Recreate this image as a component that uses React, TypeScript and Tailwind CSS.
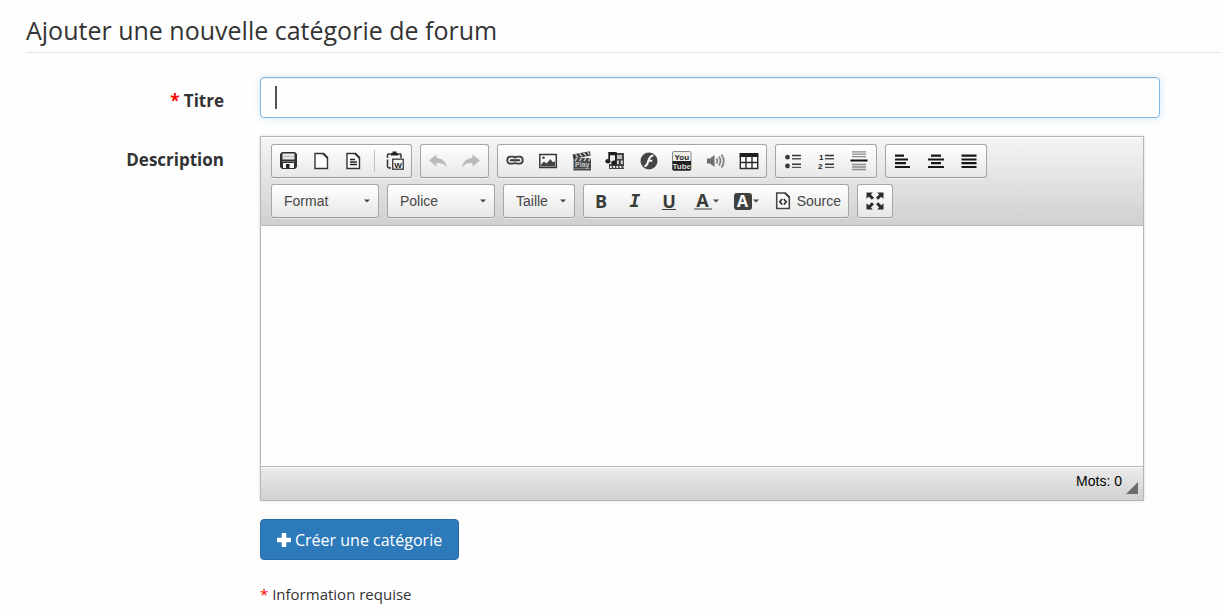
import type { ReactNode } from "react";

const DARK = "#3a3c3a";

function Icon({ children }: { children: ReactNode }) {
  return (
    <svg width="20" height="20" viewBox="0 0 20 20" fill="none" className="block shrink-0" aria-hidden="true">
      {children}
    </svg>
  );
}

function Tool({
  label,
  disabled,
  size = "min-w-8 flex-1",
  children,
}: {
  label: string;
  disabled?: boolean;
  size?: string;
  children: ReactNode;
}) {
  return (
    <button
      type="button"
      title={label}
      aria-label={label}
      disabled={disabled}
      className={`flex h-8 items-center justify-center ${size}`}
    >
      {children}
    </button>
  );
}

const groupBase =
  "flex h-[34px] shrink-0 items-center rounded-[3px] border border-[#a6a6a6] border-b-[#979797] bg-linear-to-b from-white to-[#e6e8e6] shadow-[0_1px_0_rgba(255,255,255,0.5),inset_0_0_2px_rgba(255,255,255,0.15)]";

function Group({ width, children }: { width: string; children: ReactNode }) {
  return <div className={`${groupBase} ${width}`}>{children}</div>;
}

function Caret() {
  return (
    <svg width="6" height="4" viewBox="0 0 6 4" className="block shrink-0" aria-hidden="true">
      <path d="M0 .5h6L3 3.5z" fill="#474747" />
    </svg>
  );
}

function Combo({ label, width }: { label: string; width: string }) {
  return (
    <div className={`relative ${groupBase} ${width}`}>
      <select
        aria-label={label}
        className="h-full w-full appearance-none bg-transparent pl-3 font-['Liberation_Sans',Arial,sans-serif] text-[14px] text-[#474747] outline-none"
      >
        <option>{label}</option>
      </select>
      <span className="pointer-events-none absolute top-[14px] right-2">
        <Caret />
      </span>
    </div>
  );
}

const smallText = { fontFamily: "'Liberation Sans', Arial, sans-serif", fontWeight: 700 } as const;

function SaveIcon() {
  return (
    <Icon>
      <path d="M4 1h13l2 2v13l-2 2H4l-2-2V3z" fill="#2e302e" />
      <path d="M4.500 2.500h12v6h-12z" fill="#e3e5e3" />
      <path d="M4.500 5.500h12" stroke="#bbb" />
      <path d="M4 10h13v1H4z" fill="#777" />
      <path d="M5 12h11v5H5z" fill="#f4f4f4" />
      <path d="M8 13h3.500v4H8z" fill="#222" />
    </Icon>
  );
}

function PageIcon({ lines }: { lines?: boolean }) {
  return (
    <Icon>
      <path d="M4 2.500h8.500l4 4V17.500H4z" fill="#fdfdfd" stroke="#333533" strokeWidth="1.400" />
      <path d="M12 2.500l4.500 4.500" stroke="#333533" strokeWidth="1.800" />
      {lines && <path d="M7 8.500h5M7 11h7M7 13.500h7" stroke="#222" strokeWidth="1.500" />}
    </Icon>
  );
}

function PasteWordIcon() {
  return (
    <Icon>
      <path d="M5 3H3.500Q2.500 3 2.500 4V7M2.500 8.500v6.500Q2.500 17 4.500 17H6M14 3h1.500Q16 3 16 4v3" stroke="#333" strokeWidth="1.500" />
      <path d="M5.500 2h2V.5h4V2h2v2.500h-8z" fill="#222" />
      <rect x="7.700" y="8.200" width="10.600" height="10" fill="#f6f6f6" stroke="#444" strokeWidth="1.400" />
      <text x="13" y="16.500" textAnchor="middle" fontSize="8" fill="#222" style={smallText}>W</text>
    </Icon>
  );
}

function UndoIcon({ flip }: { flip?: boolean }) {
  return (
    <Icon>
      <path
        d="M1 9.500 8.500 3.500V7C14 7.200 18 10 19 16.500 16 12.800 13.500 12 8.500 12v3.500z"
        fill="#b9bbb9"
        transform={flip ? "matrix(-1 0 0 1 20 0)" : undefined}
      />
    </Icon>
  );
}

function LinkIcon() {
  return (
    <Icon>
      <rect x="2.300" y="5.700" width="8.400" height="7" rx="3.200" stroke={DARK} strokeWidth="1.800" />
      <rect x="9.300" y="5.700" width="8.400" height="7" rx="3.200" stroke={DARK} strokeWidth="1.800" />
      <path d="M6 9.200h8" stroke="#e4e4e4" strokeWidth="4" strokeLinecap="round" />
      <path d="M5.800 9.200h8.400" stroke={DARK} strokeWidth="1.900" strokeLinecap="round" />
    </Icon>
  );
}

function ImageIcon() {
  return (
    <Icon>
      <rect x="1.800" y="3.500" width="16.500" height="13" fill="#fafafa" stroke="#353735" strokeWidth="1.500" />
      <path d="M3 15.500v-2l3-3 2.500 2 4-4.500 2 3 2.500-.5v5z" fill="#444" />
      <circle cx="5.500" cy="6.700" r="1.300" fill="#444" />
    </Icon>
  );
}

function ClapIcon() {
  return (
    <Icon>
      <path d="M.5 3.500 18 .3l.7 4.200L1.500 8z" fill="#3d3d3d" />
      <path d="m3.500 3.500 2.500 3M7.500 2.500l2.500 3M11.500 1.700l2.500 3M15.500 1l2 2.700" stroke="#c4c4c4" strokeWidth="1.400" />
      <path d="M1.500 7H19v12.500H1.500z" fill="#484848" />
      <path d="m3 10 2-3M7.500 10l2-3M12 10l2-3M16.500 10l2-3" stroke="#bdbdbd" strokeWidth="1.400" />
      <path d="M1.500 17.500H19" stroke="#777" />
      <text x="10.300" y="16" textAnchor="middle" fontSize="7" fill="#c4c4c4" style={smallText}>Play</text>
    </Icon>
  );
}

function MediaIcon() {
  return (
    <Icon>
      <path d="M10 2h9v16H4v-5h6z" fill="#444" />
      <path d="M12 4h5v4h-5z" fill="#bbb" />
      <path d="M12.800 9.500v3.500M16.800 9.500v3.500" stroke="#e2e2e2" strokeWidth="1.800" />
      <path d="M5 16h13.500" stroke="#eee" strokeWidth="2" strokeDasharray="1.800 1.400" />
      <path d="M4.200 9V2h6.600v9" stroke="#1f1f1f" strokeWidth="1.800" />
      <path d="M4 2h7v2.500H4z" fill="#1f1f1f" />
      <path d="M5.100 4.500h4.800V9H5.100z" fill="#eee" />
      <ellipse cx="2.900" cy="10.300" rx="2.600" ry="2.200" fill="#222" />
      <ellipse cx="9" cy="11.800" rx="2.700" ry="2.200" fill="#1c1c1c" />
    </Icon>
  );
}

function FlashIcon() {
  return (
    <Icon>
      <circle cx="10" cy="10" r="8.500" fill="#444644" />
      <path d="M14.500 4.500C10.500 4.500 9.800 8 9 11c-.6 2.500-1.500 4-3.500 4.300M8.500 9.800h4.800" stroke="#fafafa" strokeWidth="2" />
    </Icon>
  );
}

function YoutubeIcon() {
  return (
    <Icon>
      <rect x=".5" y=".5" width="18.500" height="19" rx="1.500" fill="#eee" stroke="#888" />
      <path d="M.5 10H19v8.500l-1 1H1.500l-1-1z" fill="#222" />
      <text x="9.800" y="8.500" textAnchor="middle" fontSize="8" fill="#222" style={smallText}>You</text>
      <text x="9.800" y="17.500" textAnchor="middle" fontSize="8" fill="#ddd" style={smallText}>Tube</text>
    </Icon>
  );
}

function SoundIcon() {
  return (
    <Icon>
      <path d="M1 7.500h3l4.500-3.500v12L4 12.500H1z" fill="#716d73" />
      <path d="M10.500 7.500q1.700 2.500 0 5M13 5.500q3 4.500 0 9M15.500 3.500q4.500 6.500 0 13" stroke="#858288" strokeWidth="1.800" />
    </Icon>
  );
}

function TableIcon() {
  return (
    <Icon>
      <path d="M1 3h18v15H1z" fill="#fcfcfc" />
      <path d="M.5 2h19v4H.5z" fill="#1f211f" />
      <path d="M1.300 5v12.500h17.400V5M1 11.500h18M7 5v12.500M13 5v12.500" stroke="#2a2c2a" strokeWidth="1.400" />
    </Icon>
  );
}

function ListIcon({ numbered }: { numbered?: boolean }) {
  return (
    <Icon>
      <path d="M9 4.500h9M9 13.200h9" stroke="#333" strokeWidth="1.400" />
      <path d="M9 7.700h9M9 16.400h9" stroke="#555" strokeWidth="1.400" />
      {numbered ? (
        <g fill="#222" style={smallText} fontSize="8">
          <text x="3" y="9">1</text>
          <text x="2" y="18">2</text>
        </g>
      ) : (
        <g fill={DARK}>
          <circle cx="4.500" cy="6.200" r="2.400" />
          <circle cx="4.500" cy="15" r="2.400" />
        </g>
      )}
    </Icon>
  );
}

function RuleIcon() {
  return (
    <Icon>
      <path d="M3 .8h14M3 3.200h14M3 5.700h14M3 13.500h14M3 16h14M3 18.500h14" stroke="#8b8d8b" strokeWidth="1.300" />
      <path d="M1.500 9.500h17" stroke="#111" strokeWidth="2" />
    </Icon>
  );
}

function AlignIcon({ d }: { d: string }) {
  return (
    <Icon>
      <path d={d} stroke="#161816" strokeWidth="2.200" />
    </Icon>
  );
}

function SourceIcon() {
  return (
    <Icon>
      <path d="M3.700 2h8.500l4.100 4V17.500H3.700z" fill="#fafafa" stroke="#444" strokeWidth="1.500" />
      <path d="M12 2l4.500 4.500" stroke="#444" strokeWidth="2" />
      <path d="M9.200 8 6.800 10.800l2.400 2.800M10.800 8l2.400 2.800-2.400 2.800" stroke="#333" strokeWidth="1.700" />
    </Icon>
  );
}

function MaximizeIcon() {
  return (
    <Icon>
      <g fill="#2c2e2c">
        <path d="M1.500 1.500h6.300L5.900 3.600 9 6.700 6.900 8.800 3.700 5.700 1.500 7.800z" />
        <path d="M18.500 1.500h-6.300l1.900 2.100L11 6.700l2.100 2.100 3.200-3.100 2.200 2.100z" />
        <path d="M1.500 18.500h6.300l-1.900-2.100L9 13.300l-2.100-2.100-3.200 3.100-2.200-2.100z" />
        <path d="M18.500 18.500h-6.300l1.900-2.100-3.100-3.100 2.100-2.100 3.200 3.100 2.200-2.100z" />
      </g>
    </Icon>
  );
}

function Toolbar() {
  return (
    <div
      role="toolbar"
      aria-label="Barre d'outils"
      className="flex flex-col gap-[6px] border-b border-[#b6b6b6] bg-linear-to-b from-[#f4f5f4] to-[#cfd1cf] px-[10px] py-[7px] shadow-[inset_0_1px_0_white]"
    >
      <div className="flex flex-wrap gap-2">
        <Group width="w-[141px]">
          <Tool label="Enregistrer"><SaveIcon /></Tool>
          <Tool label="Nouvelle page"><PageIcon /></Tool>
          <Tool label="Modèles"><PageIcon lines /></Tool>
          <span className="mx-1 h-[22px] w-px bg-[#c0c0c0]" />
          <Tool label="Coller depuis Word"><PasteWordIcon /></Tool>
        </Group>
        <Group width="w-[69px]">
          <Tool label="Annuler" disabled><UndoIcon /></Tool>
          <Tool label="Rétablir" disabled><UndoIcon flip /></Tool>
        </Group>
        <Group width="w-[270px]">
          <Tool label="Lien"><LinkIcon /></Tool>
          <Tool label="Image"><ImageIcon /></Tool>
          <Tool label="Vidéo"><ClapIcon /></Tool>
          <Tool label="Média"><MediaIcon /></Tool>
          <Tool label="Animation Flash"><FlashIcon /></Tool>
          <Tool label="YouTube"><YoutubeIcon /></Tool>
          <Tool label="Audio"><SoundIcon /></Tool>
          <Tool label="Tableau"><TableIcon /></Tool>
        </Group>
        <Group width="w-[102px]">
          <Tool label="Liste à puces"><ListIcon /></Tool>
          <Tool label="Liste numérotée"><ListIcon numbered /></Tool>
          <Tool label="Ligne horizontale"><RuleIcon /></Tool>
        </Group>
        <Group width="w-[102px]">
          <Tool label="Aligner à gauche"><AlignIcon d="M2 4.700h9M2 8.500h13M2 12.200h11M2 16h15" /></Tool>
          <Tool label="Centrer"><AlignIcon d="M5 4.700h10M2 8.500h16M5 12.200h10M2 16h16" /></Tool>
          <Tool label="Justifier"><AlignIcon d="M2.500 4.700h15M2.500 8.500h15M2.500 12.200h15M2.500 16h15" /></Tool>
        </Group>
      </div>
      <div className="flex flex-wrap gap-2">
        <Combo label="Format" width="w-[108px]" />
        <Combo label="Police" width="w-[108px]" />
        <Combo label="Taille" width="w-[72px]" />
        <div className={`${groupBase} w-[266px] font-['Open_Sans',sans-serif] text-[18px] leading-5 font-bold text-[#3a3c3a]`}>
          <Tool label="Gras" size="w-[34px]">B</Tool>
          <Tool label="Italique" size="w-[34px]">
            <span className="font-['DejaVu_Sans_Mono',monospace] italic">I</span>
          </Tool>
          <Tool label="Souligné" size="w-[34px]">
            <span className="border-b border-[#3a3c3a] leading-4">U</span>
          </Tool>
          <Tool label="Couleur de texte" size="w-10">
            <span className="mr-px w-[18px] border-b-2 border-[#949694] text-center leading-4">A</span>
            <Caret />
          </Tool>
          <Tool label="Couleur d'arrière-plan" size="w-10">
            <span className="mr-px w-[18px] rounded-[3px] bg-[#3f413f] text-center text-[16px] leading-[17px] text-white">A</span>
            <Caret />
          </Tool>
          <button
            type="button"
            className="flex h-8 flex-1 items-center justify-end gap-1 pr-[7px] font-['Liberation_Sans',Arial,sans-serif] text-[14px] font-normal text-[#474747]"
          >
            <SourceIcon />
            Source
          </button>
        </div>
        <Group width="w-9">
          <Tool label="Agrandir"><MaximizeIcon /></Tool>
        </Group>
      </div>
    </div>
  );
}

export default function App() {
  return (
    <main className="min-h-screen bg-[#fefefe] pl-[26px] font-['Open_Sans','Noto_Sans',sans-serif] text-[#333]">
      <form>
        <h1 className="border-b border-[#e5e5e5] pt-3 pb-1 text-[25px] leading-9">
          Ajouter une nouvelle catégorie de forum
        </h1>

        <div className="mt-6 mr-[61px] grid grid-cols-[198px_minmax(0,1fr)] gap-x-9 gap-y-[18px]">
          <label htmlFor="title" className="pt-3 text-right text-[17px] leading-6 font-bold">
            <span className="text-[#f00]">*</span> Titre
          </label>
          <div className="relative">
            <input
              id="title"
              type="text"
              className="block h-[41px] w-full rounded-[4px] border border-[#84b8e4] bg-[#fefefe] px-4 text-[16px] caret-transparent shadow-[inset_0_1px_1px_rgba(0,0,0,0.075),0_0_8px_rgba(102,175,233,0.3)] outline-none"
            />
            <span className="absolute top-[9px] left-[15px] h-[23px] w-[2px] bg-[#555]" />
          </div>

          <label htmlFor="description" className="pt-3 text-right text-[17px] leading-6 font-bold">
            Description
          </label>
          <div className="mr-4 border border-[#b6b6b6] shadow-[0_0_3px_rgba(0,0,0,0.15)]">
            <Toolbar />
            <textarea id="description" className="block h-60 w-full resize-none bg-[#fefefe] p-5 text-[14px] outline-none" />
            <div className="flex h-[34px] justify-end border-t border-[#b6b6b6] bg-linear-to-b from-[#ebeceb] to-[#cfd1cf] pr-[5px] font-['Liberation_Sans',Arial,sans-serif] text-[14px] text-black shadow-[inset_0_1px_0_white]">
              <span className="pt-1 leading-5">Mots: 0</span>
              <svg width="12" height="12" viewBox="0 0 12 12" className="mt-[15px] ml-1" aria-hidden="true">
                <path d="M12 0v12H0z" fill="#6b6d6b" />
              </svg>
            </div>
          </div>

          <div className="col-start-2 flex flex-col items-start gap-6">
            <button
              type="submit"
              className="flex h-[41px] items-center gap-1 rounded-[4px] border border-[#2a6caa] bg-[#2d7aba] px-4 text-[16px] text-white"
            >
              <svg width="14" height="14" viewBox="0 0 13 13" aria-hidden="true">
                <path
                  d="M5 0h3q.6 0 .6.600V4.400h3.800q.6 0 .6.600v3q0 .6-.6.600H8.600v3.800q0 .6-.6.600H5q-.6 0-.6-.6V8.600H.6Q0 8.600 0 8V5q0-.6.600-.6H4.400V.6Q4.400 0 5 0z"
                  fill="#fff"
                />
              </svg>
              Créer une catégorie
            </button>
            <p className="text-[15px] leading-5">
              <span className="text-[#f00]">*</span> Information requise
            </p>
          </div>
        </div>
      </form>
    </main>
  );
}
